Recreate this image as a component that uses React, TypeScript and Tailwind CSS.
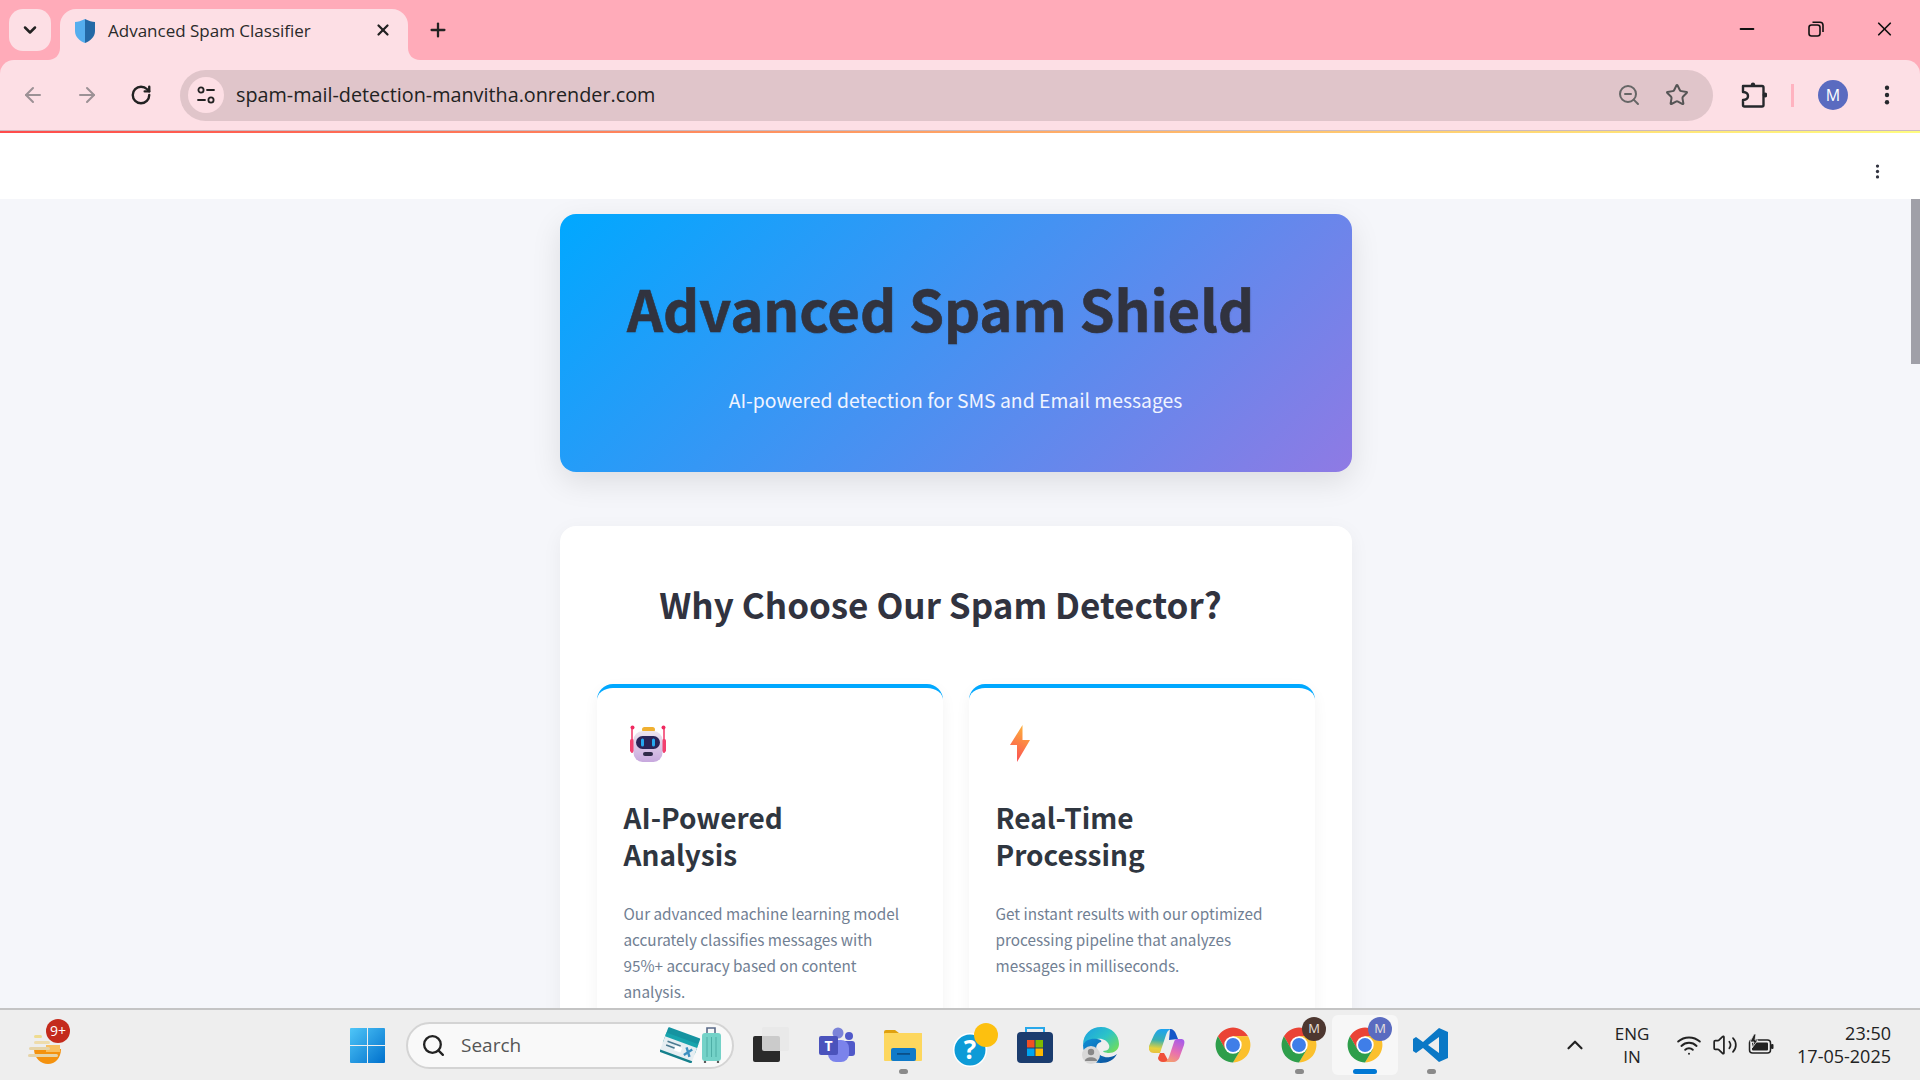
import React from "react";
import { ArrowLeft, ArrowRight, RotateCw, ZoomOut, Star, X, Plus, ChevronDown, ChevronUp, Search, Minus, Wifi, Volume2 } from "lucide-react";

const uiFont = "font-['Open_Sans','Noto_Sans',sans-serif]";

function Shield() {
  return (
    <svg width="22" height="24" viewBox="0 0 22 24">
      <path d="M11 0 C7 2 4 3 1 3 V12 C1 18 6 22 11 24 Z" fill="#55aeee" />
      <path d="M11 0 C15 2 18 3 21 3 V12 C21 18 16 22 11 24 Z" fill="#2469a6" />
    </svg>
  );
}

function SiteTune() {
  return (
    <svg width="20" height="20" viewBox="0 0 20 20" fill="none" stroke="#222" strokeWidth="1.8" strokeLinecap="round">
      <circle cx="5" cy="5" r="2.6" />
      <path d="M11 5 H18" />
      <circle cx="15" cy="15" r="2.6" />
      <path d="M2 15 H9" />
    </svg>
  );
}

function PuzzleIcon() {
  return (
    <svg width="26" height="26" viewBox="0 0 26 26" fill="none" stroke="#26282c" strokeWidth="2.4" strokeLinejoin="round">
      <path d="M2 4 H21 a1.5 1.5 0 0 1 1.5 1.5 V23 a1.5 1.5 0 0 1 -1.5 1.5 H3.5 a1.5 1.5 0 0 1 -1.5 -1.5 V18 C6 18 7 16 7 14 C7 12 6 10 2 10 Z" />
      <circle cx="12" cy="2.8" r="2.2" fill="#26282c" stroke="none" />
      <circle cx="24" cy="13" r="2.4" fill="#26282c" stroke="none" />
    </svg>
  );
}

function RestoreIcon() {
  return (
    <svg width="16" height="16" viewBox="0 0 16 16" fill="none" stroke="#111" strokeWidth="1.6">
      <rect x="1" y="4" width="11" height="11" rx="2.5" />
      <path d="M4.5 1.2 H12 a3 3 0 0 1 3 3 V11" />
    </svg>
  );
}

function Dots({ color, size }: { color: string; size: string }) {
  return (
    <svg className={size} viewBox="0 0 6 22" fill={color}>
      <circle cx="3" cy="3" r="2.4" />
      <circle cx="3" cy="11" r="2.4" />
      <circle cx="3" cy="19" r="2.4" />
    </svg>
  );
}

function Flare({ flip }: { flip?: boolean }) {
  return (
    <svg width="12" height="12" viewBox="0 0 12 12" className={flip ? "-scale-x-100" : ""}>
      <path d="M12 0 V12 H0 C7 12 12 7 12 0 Z" fill="#fddfe5" />
    </svg>
  );
}

function Robot() {
  return (
    <svg width="36" height="37" viewBox="0 0 36 37">
      <defs>
        <linearGradient id="rb" x1="0" y1="0" x2="0" y2="1">
          <stop offset="0" stopColor="#eee6ee" />
          <stop offset="1" stopColor="#c7a8de" />
        </linearGradient>
      </defs>
      <path d="M2 3 V28" stroke="#f2406f" strokeWidth="1.6" />
      <path d="M34 3 V28" stroke="#f2406f" strokeWidth="1.6" />
      <circle cx="2.5" cy="2.5" r="2" fill="#f02a60" />
      <circle cx="33.5" cy="2.5" r="2" fill="#f02a60" />
      <rect x="0" y="14" width="4" height="13" rx="1.5" fill="#f2406f" />
      <rect x="32" y="14" width="4" height="13" rx="1.5" fill="#f2406f" />
      <rect x="12" y="2" width="13" height="5" rx="2.5" fill="#f0b030" />
      <rect x="3.5" y="6" width="29" height="31" rx="9" fill="url(#rb)" />
      <rect x="6" y="11" width="24" height="13" rx="6.5" fill="#2a2458" />
      <rect x="11" y="13.5" width="3" height="8" rx="1.5" fill="#25a8f0" />
      <rect x="22" y="13.5" width="3" height="8" rx="1.5" fill="#25a8f0" />
      <rect x="13" y="27" width="10" height="4" rx="2" fill="#2f2a48" />
    </svg>
  );
}

function Bolt() {
  return (
    <svg width="20" height="37" viewBox="0 0 20 37">
      <defs>
        <linearGradient id="bt" x1="0.6" y1="0" x2="0.3" y2="1">
          <stop offset="0" stopColor="#fdb03a" />
          <stop offset="1" stopColor="#fb4e55" />
        </linearGradient>
      </defs>
      <path d="M12.5 0 V15 H20 L7 37 V20 H0 Z" fill="url(#bt)" />
    </svg>
  );
}

function Chrome() {
  const seg = "M4.95 13 A22 22 0 0 1 43.05 13 H24 L14.5 30 Z";
  return (
    <svg width="38" height="38" viewBox="0 0 48 48">
      <path d={seg} fill="#ea4335" />
      <path d={seg} fill="#fbc02d" transform="rotate(120 24 24)" />
      <path d={seg} fill="#2e9e4b" transform="rotate(240 24 24)" />
      <circle cx="24" cy="24" r="11" fill="#fff" />
      <circle cx="24" cy="24" r="8.8" fill="#3f7ee8" />
    </svg>
  );
}

function ChromeBadge({ color }: { color: string }) {
  return (
    <div className="relative">
      <Chrome />
      <span className={`absolute -top-[9px] -right-[8px] flex h-[24px] w-[24px] items-center justify-center rounded-full text-[13px] text-[#e8e0dc] ${uiFont} ${color}`}>M</span>
    </div>
  );
}

function Teams() {
  return (
    <svg width="38" height="36" viewBox="0 0 38 36">
      <circle cx="20" cy="6" r="5.5" fill="#7b83d8" />
      <circle cx="31" cy="9" r="4" fill="#5059c9" />
      <rect x="24" y="14" width="13" height="15" rx="3" fill="#5059c9" />
      <rect x="10" y="13" width="21" height="22" rx="8" fill="#7b83eb" />
      <rect x="1" y="9" width="19" height="19" rx="2" fill="#4b53bc" />
      <text x="10.5" y="24" textAnchor="middle" fontSize="14" fontWeight="700" fill="#fff" fontFamily="Open Sans">T</text>
    </svg>
  );
}

function Folder() {
  return (
    <svg width="38" height="32" viewBox="0 0 38 32">
      <path d="M0 3 a2 2 0 0 1 2 -2 H11 L15 4 H36 a2 2 0 0 1 2 2 V10 H0 Z" fill="#e0a10e" />
      <rect x="0" y="4" width="38" height="28" rx="1" fill="#fdd75e" />
      <rect x="7" y="19" width="25" height="13" rx="2" fill="#0f7ac9" />
      <rect x="13" y="24" width="13" height="1.8" fill="#0a4f88" />
    </svg>
  );
}

function Help() {
  return (
    <svg width="46" height="44" viewBox="0 0 46 44" className="ml-[12px]">
      <circle cx="18" cy="27" r="17" fill="#fff" />
      <circle cx="18" cy="27" r="15.5" fill="#0d9bd7" />
      <text x="18" y="36" textAnchor="middle" fontSize="26" fontWeight="700" fill="#fff" fontFamily="Open Sans">?</text>
      <circle cx="34" cy="12" r="12" fill="#fdc00f" />
    </svg>
  );
}

function Store() {
  return (
    <svg width="36" height="36" viewBox="0 0 36 36">
      <path d="M9 6 V1 H27 V6" fill="none" stroke="#28a8ea" strokeWidth="2" />
      <rect x="0" y="5" width="36" height="31" rx="4" fill="#1b3c6e" />
      <rect x="10" y="13" width="7.5" height="7.5" fill="#f25022" />
      <rect x="18.5" y="13" width="7.5" height="7.5" fill="#7fba00" />
      <rect x="10" y="21.5" width="7.5" height="7.5" fill="#00a4ef" />
      <rect x="18.5" y="21.5" width="7.5" height="7.5" fill="#ffb900" />
    </svg>
  );
}

function Edge() {
  return (
    <svg width="38" height="38" viewBox="0 0 38 38">
      <defs>
        <linearGradient id="eg" x1="0" y1="0" x2="1" y2="0.8">
          <stop offset="0" stopColor="#1b9de2" />
          <stop offset="0.55" stopColor="#2cc4c8" />
          <stop offset="1" stopColor="#6fdc5c" />
        </linearGradient>
        <linearGradient id="eb" x1="0" y1="0" x2="1" y2="1">
          <stop offset="0" stopColor="#0f8fd6" />
          <stop offset="1" stopColor="#0c4f9a" />
        </linearGradient>
      </defs>
      <path d="M1 19 C1 8 9 1 19 1 C30 1 37 9 37 18 C37 24 32 27 27 27 C24 27 21 26 21 25 C26 25 28 22 27 19 C25 14 20 12 15 13 C8 14 3 15 1 19 Z" fill="url(#eg)" />
      <path d="M1 19 C3 14 9 12 15 13 C19 13.5 20 15 19 16 C15 17 13 21 15 25 C17 30 23 32 28 31 C31 30.5 34 29 35 28 C32 34 26 37 19 37 C9 37 1 29 1 19 Z" fill="url(#eb)" />
      <circle cx="9" cy="29" r="9" fill="#d8d8d8" />
      <circle cx="9" cy="26" r="3.2" fill="#888" />
      <path d="M3 35 C3 30 15 30 15 35 Z" fill="#888" />
    </svg>
  );
}

function Copilot() {
  return (
    <svg width="36" height="35" viewBox="0 0 36 35">
      <defs>
        <linearGradient id="ca" x1="0.3" y1="0" x2="0.2" y2="1">
          <stop offset="0" stopColor="#1ea3ee" />
          <stop offset="0.45" stopColor="#3ab0b0" />
          <stop offset="0.8" stopColor="#e6d23c" />
          <stop offset="1" stopColor="#e8c040" />
        </linearGradient>
        <linearGradient id="cb" x1="0.7" y1="0" x2="0.3" y2="1">
          <stop offset="0" stopColor="#a85ce8" />
          <stop offset="0.55" stopColor="#e870b0" />
          <stop offset="1" stopColor="#f4a070" />
        </linearGradient>
      </defs>
      <path d="M12 1 H22 C19 2 18 4 17 7 L11 25 H5 C1 25 -1 22 0 18 L5 7 C7 3 9 1 12 1 Z" fill="url(#ca)" />
      <path d="M21 1 C24 1 26 3 27 6 L29 11 L20 12 Z" fill="#1456c8" />
      <path d="M11 25 H15 L20 34 H14 C11 34 9 32 9 30 Z" fill="#f0503a" />
      <path d="M28 11 H32 C35 11 36 13 35 17 L31 28 C30 32 27 34 24 34 H14 C17 34 19 32 20 29 L25 14 C25.5 12 26.5 11 28 11 Z" fill="url(#cb)" />
    </svg>
  );
}

function VSCode() {
  return (
    <svg width="36" height="36" viewBox="0 0 36 36">
      <path d="M26 1 L35 5 V31 L26 35 L10 21 L3 26 L0 24 V12 L3 10 L10 15 Z M26 10 L15 18 L26 26 Z" fill="#0a78c6" fillRule="evenodd" />
    </svg>
  );
}

function WinLogo() {
  return (
    <svg width="35" height="35" viewBox="0 0 35 35">
      <defs>
        <linearGradient id="wl" x1="0" y1="0" x2="1" y2="1">
          <stop offset="0" stopColor="#4fc6f8" />
          <stop offset="1" stopColor="#0070cc" />
        </linearGradient>
      </defs>
      <path d="M1 0 H17 V17 H0 V1 a1 1 0 0 1 1 -1 Z M18 0 H34 a1 1 0 0 1 1 1 V17 H18 Z M0 18 H17 V35 H1 a1 1 0 0 1 -1 -1 Z M18 18 H35 V34 a1 1 0 0 1 -1 1 H18 Z" fill="url(#wl)" />
    </svg>
  );
}

function TaskView() {
  return (
    <svg width="36" height="36" viewBox="0 0 36 36" className="ml-[8px]">
      <rect x="0" y="9" width="27" height="26" rx="2" fill="#2a2a2a" />
      <rect x="9" y="0" width="27" height="24" rx="2" fill="#e8e8e8" fillOpacity="0.85" />
    </svg>
  );
}

function Travel() {
  return (
    <svg width="64" height="36" viewBox="0 0 64 36">
      <g transform="rotate(20 20 18)">
        <rect x="3" y="5" width="34" height="17" rx="1" fill="#1593a0" />
        <rect x="3" y="13" width="34" height="18" rx="1" fill="#e6eef2" />
        <rect x="3" y="11" width="34" height="4" fill="#18a4ad" />
        <rect x="3" y="29" width="34" height="2.5" fill="#15808c" />
        <rect x="7" y="18" width="14" height="1.6" fill="#4a7a90" />
        <rect x="7" y="22" width="10" height="1.6" fill="#4a7a90" />
        <rect x="16" y="20" width="7" height="5" fill="#fff" />
        <path d="M27 18 L33 26 M33 18 L27 26" stroke="#3c90c0" strokeWidth="2.4" />
      </g>
      <path d="M47 7 V1 H55 V7" fill="none" stroke="#5a6a88" strokeWidth="1.6" />
      <rect x="42" y="6" width="19" height="28" rx="3" fill="#74d2c8" />
      <path d="M47 10 V30 M51.5 10 V30 M56 10 V30" stroke="#4eaea6" strokeWidth="1" />
      <circle cx="45" cy="35" r="1.2" fill="#555" />
      <circle cx="58" cy="35" r="1.2" fill="#555" />
    </svg>
  );
}

function Weather() {
  return (
    <div className="relative h-[44px] w-[44px]">
      <svg width="36" height="30" viewBox="0 0 36 30" className="mt-[12px] ml-[2px]">
        <path d="M6 14 H33 C33 23 27 29 20 29 C13 29 6 23 6 14 Z" fill="#f4920f" />
        <path d="M18 10 H32 V17 H18 Z" fill="#f9c060" />
        <rect x="6" y="0" width="8" height="3" rx="1.5" fill="#efdc90" />
        <rect x="6" y="6" width="16" height="3" rx="1.5" fill="#eedcac" />
        <rect x="1" y="12" width="21" height="3" rx="1.5" fill="#e6d4a8" />
        <rect x="0" y="19" width="30" height="3" rx="1.5" fill="#e6d4a8" />
      </svg>
      <span className={`absolute left-[20px] top-[-4px] flex h-[24px] w-[24px] items-center justify-center rounded-full bg-[#c42b1c] text-[14px] leading-none text-white ${uiFont}`}>9+</span>
    </div>
  );
}

function Battery() {
  return (
    <svg width="26" height="22" viewBox="0 0 26 22">
      <rect x="1.5" y="6" width="21" height="13" rx="3" fill="none" stroke="#222" strokeWidth="1.5" />
      <rect x="4" y="8.5" width="16" height="8" rx="1" fill="#222" />
      <rect x="23" y="10" width="2.5" height="5" rx="1" fill="#222" />
      <path d="M6 0 L2 8 H6 L4 14 L10 6 H7 L8 0 Z" fill="#222" stroke="#eeeeee" strokeWidth="0.8" />
    </svg>
  );
}

function Slot({ children, dot, active }: { children: React.ReactNode; dot?: boolean; active?: boolean }) {
  return (
    <div className={`relative flex h-[60px] w-[66px] shrink-0 items-center justify-center rounded-md ${active ? "bg-[#f7f7f7]" : ""}`}>
      {children}
      {dot && <span className="absolute bottom-[1px] h-[5px] w-[9px] rounded-full bg-[#8a8a8a]" />}
      {active && <span className="absolute bottom-[1px] h-[5px] w-[24px] rounded-full bg-[#0078d4]" />}
    </div>
  );
}

function Feature({ icon, title, text }: { icon: React.ReactNode; title: React.ReactNode; text: string }) {
  return (
    <div className="h-[420px] rounded-2xl border-t-4 border-[#00a8ff] bg-white px-[27px] pt-[37px] shadow-[0_5px_15px_rgba(0,0,0,0.05)]">
      <div className="flex h-[37px] items-center">{icon}</div>
      <h3 className="mt-[37px] text-[28px] font-bold leading-[37px] text-[#2f3640]">{title}</h3>
      <p className="mt-[27px] pr-[8px] text-[15.3px] leading-[26px] text-[#718093]">{text}</p>
    </div>
  );
}

export default function App() {
  return (
    <div className="flex h-screen w-full flex-col overflow-hidden bg-white">
      {/* tab strip */}
      <div className={`flex h-[60px] shrink-0 bg-[#ffabb9] ${uiFont}`}>
        <div className="ml-[9px] mt-[9px] flex h-[42px] w-[42px] items-center justify-center rounded-[14px] bg-[#fddfe5]">
          <ChevronDown size={20} strokeWidth={3} color="#222" />
        </div>
        <div className="relative ml-[9px] mt-[9px] flex h-[51px] w-[348px] items-center rounded-t-[16px] bg-[#fddfe5] pb-[7px] pl-[14px] pr-[16px]">
          <span className="absolute -left-[12px] bottom-0 flex"><Flare /></span>
          <span className="absolute -right-[12px] bottom-0 flex"><Flare flip /></span>
          <Shield />
          <span className="ml-[12px] flex-1 text-[17px] text-[#2a2a2a]">Advanced Spam Classifier</span>
          <X size={18} strokeWidth={3} color="#222" className="mb-[3px]" />
        </div>
        <div className="ml-[19px] mt-[19px] flex h-[22px] w-[22px] items-center justify-center">
          <Plus size={22} strokeWidth={2.5} color="#222" />
        </div>
        <div className="ml-auto mr-[24px] mt-[18px] flex h-[22px] items-center gap-[46px]">
          <span className="flex w-[23px] justify-center"><Minus size={22} strokeWidth={2} color="#111" /></span>
          <span className="flex w-[23px] justify-center"><RestoreIcon /></span>
          <span className="flex w-[23px] justify-center"><X size={24} strokeWidth={1.8} color="#111" /></span>
        </div>
      </div>
      {/* toolbar */}
      <div className={`flex h-[71px] shrink-0 items-center border-b border-[#cdb9bf] bg-[#ffabb9] ${uiFont}`}>
        <div className="flex h-full w-full items-center rounded-t-[14px] bg-[#fddfe5] pl-[6px] pr-[30px]">
          <span className="flex w-[54px] justify-center"><ArrowLeft size={24} strokeWidth={2} color="#9c9195" /></span>
          <span className="flex w-[54px] justify-center"><ArrowRight size={24} strokeWidth={2} color="#9c9195" /></span>
          <span className="flex w-[54px] justify-center"><RotateCw size={22} strokeWidth={2.6} color="#222" /></span>
          <div className="ml-[12px] flex h-[51px] flex-1 items-center rounded-full bg-[#e0c5ca] pl-[8px] pr-[24px]">
            <span className="flex h-[36px] w-[36px] items-center justify-center rounded-full bg-[#fddfe5]"><SiteTune /></span>
            <span className="ml-[12px] flex-1 text-[19.8px] text-[#222]">spam-mail-detection-manvitha.onrender.com</span>
            <ZoomOut size={24} strokeWidth={2} color="#666" />
            <Star size={24} strokeWidth={2} color="#555" className="ml-[24px]" />
          </div>
          <span className="ml-[28px] flex"><PuzzleIcon /></span>
          <span className="ml-[24px] h-[23px] w-[3px] bg-[#ffb3c0]" />
          <span className="ml-[24px] flex h-[30px] w-[30px] items-center justify-center rounded-full bg-[#5a6bc0] text-[16px] text-white">M</span>
          <span className="ml-[36px] flex"><Dots color="#26282c" size="h-[20px] w-[6px]" /></span>
        </div>
      </div>
      <div className="h-[2px] shrink-0 bg-[linear-gradient(90deg,#ff4b4b,#fffd80)]" />
      {/* streamlit header */}
      <div className="flex h-[66px] shrink-0 items-center justify-end bg-white pr-[40px] pt-[10px]">
        <Dots color="#31333f" size="h-[15px] w-[5px]" />
      </div>
      {/* page */}
      <div className="flex min-h-0 flex-1">
        <div className="min-w-0 flex-1 overflow-hidden bg-[#f5f6fa] font-['Noto_Sans_CJK_SC','Noto_Sans_CJK_JP',sans-serif]">
          <div className="mx-auto w-[792px] pt-[15px]">
            <div className="flex h-[258px] flex-col items-center rounded-2xl bg-[linear-gradient(135deg,#00a8ff,#8f7ae4)] shadow-[0_10px_30px_rgba(0,0,0,0.1)]">
              <h1 className="mt-[54px] w-full pr-[30px] text-center text-[56.2px] font-bold leading-[80px] text-[#31333f] [-webkit-text-stroke:0.6px_#31333f] [text-shadow:1px_1px_2px_rgba(0,0,0,0.08)]">Advanced Spam Shield</h1>
              <p className="mt-[37px] text-[19.35px] leading-[30px] text-[#f0f4ff]">AI-powered detection for SMS and Email messages</p>
            </div>
            <div className="mt-[54px] rounded-2xl bg-white px-[37px] shadow-[0_5px_20px_rgba(0,0,0,0.05)]">
              <h2 className="w-full pr-[30px] pt-[49px] text-center text-[35px] font-bold leading-[58px] text-[#31333f]">Why Choose Our Spam Detector?</h2>
              <div className="mt-[51px] grid grid-cols-2 gap-[26px]">
                <Feature
                  icon={<span className="ml-[6px] flex"><Robot /></span>}
                  title={<>AI-Powered<br />Analysis</>}
                  text="Our advanced machine learning model accurately classifies messages with 95%+ accuracy based on content analysis."
                />
                <Feature
                  icon={<span className="ml-[14px] flex"><Bolt /></span>}
                  title={<>Real-Time<br />Processing</>}
                  text="Get instant results with our optimized processing pipeline that analyzes messages in milliseconds."
                />
              </div>
            </div>
          </div>
        </div>
        <div className="w-[9px] shrink-0 bg-[#f5f6fa]">
          <div className="h-[165px] bg-[#a0a0a8]" />
        </div>
      </div>
      {/* taskbar */}
      <div className={`flex h-[72px] shrink-0 items-center border-t-[2px] border-[#c4c4c4] bg-[#eeeeee] ${uiFont}`}>
        <div className="ml-[26px] flex w-[308px] items-center"><Weather /></div>
        <Slot><WinLogo /></Slot>
        <div className="ml-[6px] flex h-[47px] w-[328px] shrink-0 items-center rounded-full border-2 border-[#d4d4d4] bg-[#f9f9f9] pl-[13px] pr-[8px]">
          <Search size={25} strokeWidth={2.2} color="#222" />
          <span className="ml-[15px] flex-1 text-[19px] text-[#555]">Search</span>
          <Travel />
        </div>
        <Slot><TaskView /></Slot>
        <span className="w-[4px]" />
        <Slot><Teams /></Slot>
        <Slot dot><Folder /></Slot>
        <Slot><Help /></Slot>
        <Slot><Store /></Slot>
        <Slot><Edge /></Slot>
        <Slot><Copilot /></Slot>
        <Slot><Chrome /></Slot>
        <Slot dot><ChromeBadge color="bg-[#4d3730]" /></Slot>
        <Slot active><ChromeBadge color="bg-[#5a6bc0]" /></Slot>
        <Slot dot><VSCode /></Slot>
        <div className="ml-auto flex items-center pr-[29px]">
          <ChevronUp size={26} strokeWidth={2} color="#222" />
          <div className="ml-[14px] flex w-[60px] flex-col items-center text-[17px] leading-[23px] text-[#222]">
            <span>ENG</span>
            <span>IN</span>
          </div>
          <span className="ml-[14px] flex"><Wifi size={26} strokeWidth={1.8} color="#222" /></span>
          <span className="ml-[10px] flex"><Volume2 size={26} strokeWidth={1.6} color="#222" /></span>
          <span className="ml-[10px] flex"><Battery /></span>
          <div className="ml-[23px] flex flex-col items-end text-[18px] leading-[23px] text-[#222]">
            <span>23:50</span>
            <span>17-05-2025</span>
          </div>
        </div>
      </div>
    </div>
  );
}
